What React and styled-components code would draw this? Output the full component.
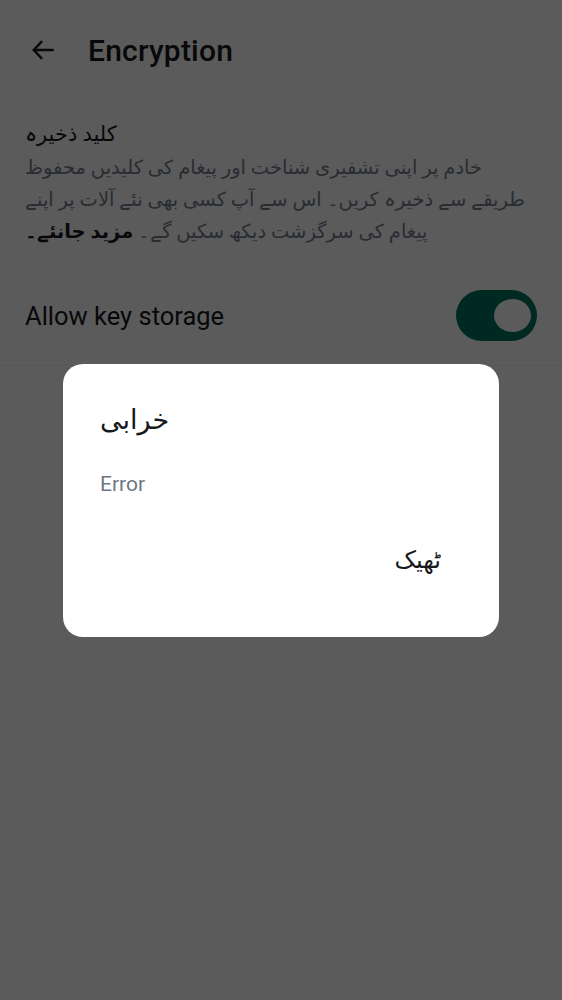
import React from "react";
import styled, { createGlobalStyle } from "styled-components";

const GlobalStyle = createGlobalStyle`
  html, body {
    margin: 0;
    padding: 0;
    background: #ffffff;
  }
  body {
    font-family: Roboto, "Noto Sans", "DejaVu Sans", sans-serif;
    color: #17191c;
  }
`;

const Page = styled.div`
  min-height: 100vh;
  background: #ffffff;
`;

const Header = styled.header`
  display: flex;
  align-items: center;
  height: 100px;
  padding: 0 0 0 30px;
  gap: 32px;
`;

const BackButton = styled.button`
  display: flex;
  align-items: center;
  justify-content: center;
  width: 26px;
  height: 26px;
  padding: 0;
  border: none;
  background: none;
  color: #17191c;
`;

const Title = styled.h1`
  margin: 0;
  font-size: 30px;
  font-weight: 500;
  letter-spacing: 0.2px;
`;

const Section = styled.section`
  padding: 16px 25px 0 25px;
`;

const SectionTitle = styled.h2`
  margin: 0;
  direction: rtl;
  text-align: left;
  font-size: 21px;
  font-weight: 400;
  line-height: 36px;
`;

const Description = styled.p`
  margin: 0;
  direction: rtl;
  text-align: left;
  max-width: 500px;
  font-size: 19.5px;
  line-height: 32px;
  color: #737d8c;

  b {
    color: #17191c;
    font-weight: 700;
  }
`;

const ToggleRow = styled.div`
  display: flex;
  align-items: center;
  justify-content: space-between;
  padding: 42px 25px 24px 25px;
  border-bottom: 1px solid #f0f0f0;
`;

const ToggleLabel = styled.span`
  font-size: 25.5px;
`;

const Switch = styled.div`
  width: 81px;
  height: 51px;
  border-radius: 26px;
  background: ${(p) => (p.$on ? "#00755c" : "#c1c6cd")};
  display: flex;
  align-items: center;
  justify-content: ${(p) => (p.$on ? "flex-end" : "flex-start")};
  padding: 0 6px;
  box-sizing: border-box;
`;

const Thumb = styled.span`
  width: 37px;
  height: 33px;
  border-radius: 50%;
  background: #ffffff;
`;

const Scrim = styled.div`
  position: fixed;
  inset: 0;
  background: rgba(0, 0, 0, 0.643);
  display: flex;
  align-items: center;
  justify-content: center;
`;

const Dialog = styled.div`
  width: 436px;
  height: 273px;
  box-sizing: border-box;
  background: #ffffff;
  border-radius: 20px;
  padding: 34px 58px 0 37px;
  display: flex;
  flex-direction: column;
`;

const DialogTitle = styled.h3`
  margin: 0;
  direction: rtl;
  text-align: left;
  font-size: 27px;
  font-weight: 400;
  line-height: 44px;
`;

const DialogBody = styled.p`
  margin: 29px 0 0 0;
  font-size: 21px;
  line-height: 26px;
  color: #6f7783;
`;

const Actions = styled.div`
  display: flex;
  justify-content: flex-end;
  margin-top: 48px;
`;

const TextButton = styled.button`
  border: none;
  background: none;
  padding: 0;
  direction: rtl;
  font-family: inherit;
  font-size: 24px;
  line-height: 30px;
  color: #17191c;
`;

export default function App() {
  return (
    <Page>
      <GlobalStyle />
      <Header>
        <BackButton aria-label="Back">
          <svg width="26" height="26" viewBox="0 0 24 24" fill="none" stroke="currentColor" strokeWidth="2.2" strokeLinecap="round" strokeLinejoin="round">
            <path d="M21 12H3.5" />
            <path d="M10.5 4.5L3.5 12l7 7.5" />
          </svg>
        </BackButton>
        <Title>Encryption</Title>
      </Header>

      <Section>
        <SectionTitle>کلید ذخیرہ</SectionTitle>
        <Description>
          خادم پر اپنی تشفیری شناخت اور پیغام کی کلیدیں محفوظ طریقے سے ذخیرہ کریں۔ اس سے آپ کسی بھی نئے آلات پر اپنے پیغام کی سرگزشت دیکھ سکیں گے۔ <b>مزید جانئے۔</b>
        </Description>
      </Section>

      <ToggleRow>
        <ToggleLabel>Allow key storage</ToggleLabel>
        <Switch $on>
          <Thumb />
        </Switch>
      </ToggleRow>

      <Scrim>
        <Dialog role="dialog">
          <DialogTitle>خرابی</DialogTitle>
          <DialogBody>Error</DialogBody>
          <Actions>
            <TextButton>ٹھیک</TextButton>
          </Actions>
        </Dialog>
      </Scrim>
    </Page>
  );
}
